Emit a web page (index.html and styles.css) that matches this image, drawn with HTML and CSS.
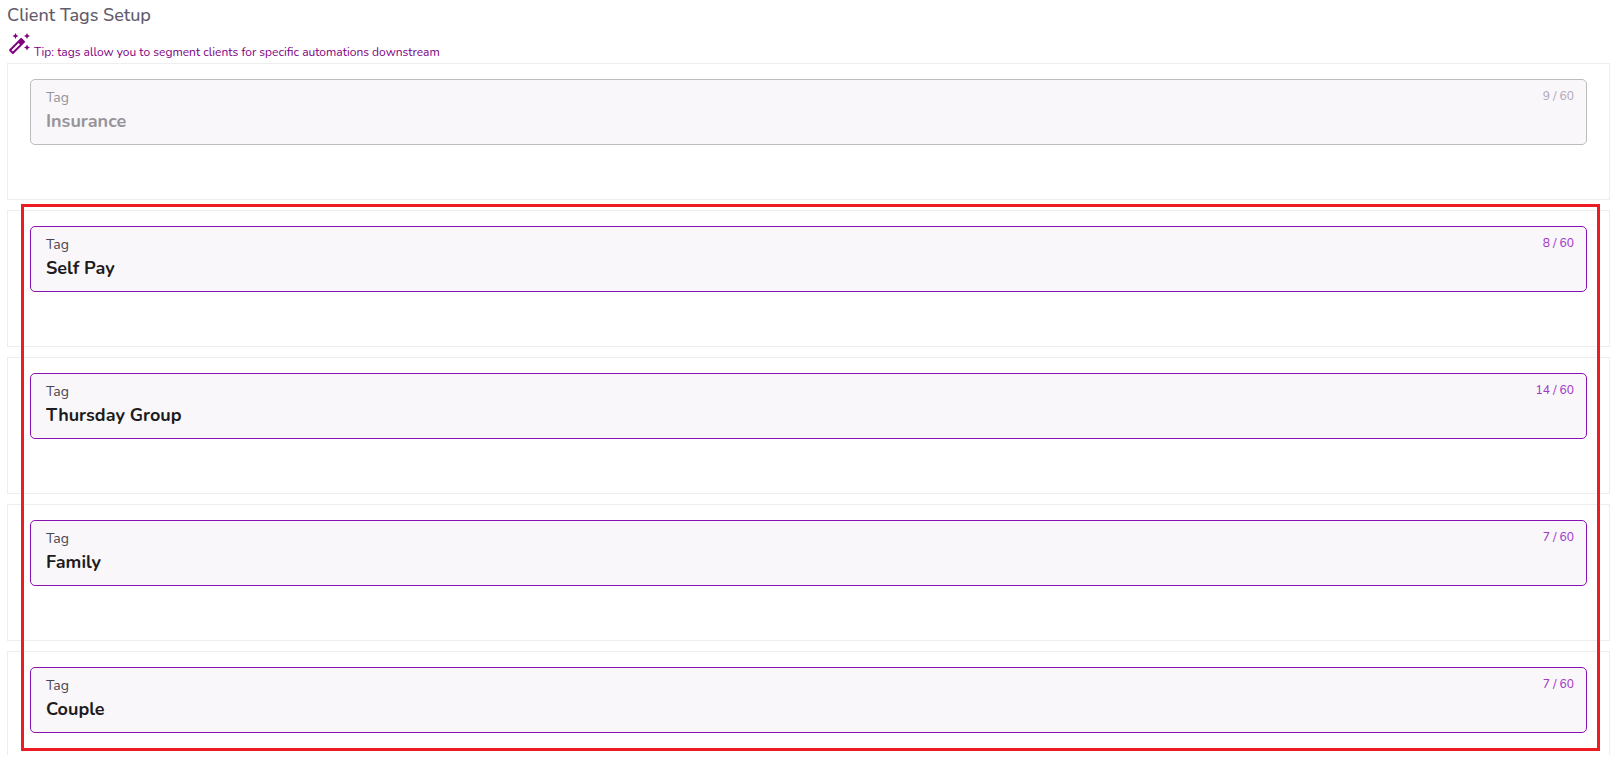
FILE: index.html
```html
<!DOCTYPE html>
<html lang="en">
  <head>
    <meta charset="UTF-8" />
    <meta name="viewport" content="width=device-width, initial-scale=1.0" />
    <title>Client Tags Setup</title>
    <link rel="stylesheet" href="styles.css">
  </head>
  <body>
    <main class="page">
      <h1 class="title">Client Tags Setup</h1>
      <div class="tip">
        <svg class="tip-icon" viewBox="0 0 24 24" fill="currentColor" aria-hidden="true">
          <path d="M20 7l.94-2.06L23 4l-2.06-.94L20 1l-.94 2.06L17 4l2.06.94zM8.5 7l.94-2.06L11.5 4l-2.06-.94L8.5 1l-.94 2.06L5.5 4l2.06.94zM20 12.5l-.94 2.06-2.06.94 2.06.94.94 2.06.94-2.06L23 15.5l-2.06-.94zM17.71 9.12l-2.83-2.83c-.2-.19-.45-.29-.71-.29s-.51.1-.71.29L2.29 17.46c-.39.39-.39 1.02 0 1.41l2.83 2.83c.2.2.45.3.71.3s.51-.1.71-.29l11.17-11.17c.39-.39.39-1.03 0-1.42zM5.83 19.59l-1.41-1.41L11.59 11 13 12.41l-7.17 7.18z" />
        </svg>
        <span class="tip-text">Tip: tags allow you to segment clients for specific automations downstream</span>
      </div>

      <div class="card">
        <div class="field disabled">
          <div class="field-main">
            <label for="tag1">Tag</label>
            <input type="text" id="tag1" name="tag1" value="Insurance" maxlength="60" disabled />
          </div>
          <span class="counter">9 / 60</span>
        </div>
      </div>

      <div class="highlighted">
        <div class="card">
          <div class="field">
            <div class="field-main">
              <label for="tag2">Tag</label>
              <input type="text" id="tag2" name="tag2" value="Self Pay" maxlength="60" />
            </div>
            <span class="counter">8 / 60</span>
          </div>
        </div>
        <div class="card">
          <div class="field">
            <div class="field-main">
              <label for="tag3">Tag</label>
              <input type="text" id="tag3" name="tag3" value="Thursday Group" maxlength="60" />
            </div>
            <span class="counter">14 / 60</span>
          </div>
        </div>
        <div class="card">
          <div class="field">
            <div class="field-main">
              <label for="tag4">Tag</label>
              <input type="text" id="tag4" name="tag4" value="Family" maxlength="60" />
            </div>
            <span class="counter">7 / 60</span>
          </div>
        </div>
        <div class="card">
          <div class="field">
            <div class="field-main">
              <label for="tag5">Tag</label>
              <input type="text" id="tag5" name="tag5" value="Couple" maxlength="60" />
            </div>
            <span class="counter">7 / 60</span>
          </div>
        </div>
        <div class="outline"></div>
      </div>
    </main>
  </body>
</html>
```

FILE: styles.css
```css
* {
  box-sizing: border-box;
}
body {
  margin: 0;
  background-color: #fff;
  font-family: Nunito, Lato, sans-serif;
}
.page {
  display: flex;
  flex-direction: column;
  height: calc(100vh - 20px);
  padding: 3px 2px 0 7px;
  overflow: hidden;
}
.title {
  flex: none;
  margin: 0;
  font-size: 18px;
  line-height: 24px;
  font-weight: 500;
  color: #625b6b;
}
.tip {
  display: flex;
  flex: none;
  align-items: flex-end;
  gap: 3px;
  height: 36px;
  padding-bottom: 3px;
  color: #800080;
}
.tip-icon {
  width: 24px;
  height: 24px;
  margin-bottom: 4px;
}
.tip-text {
  font-size: 12px;
  line-height: 16px;
}
.card {
  flex: none;
  min-height: 137px;
  margin-bottom: 10px;
  padding: 15px 22px;
  border: 1px solid #eee;
}
.field {
  display: flex;
  align-items: flex-start;
  height: 66px;
  padding: 8px 12px 8px 15px;
  border: 1px solid #8a12b4;
  border-radius: 5px;
  background-color: #f9f7fa;
}
.field-main {
  flex: 1;
}
label {
  display: block;
  font-size: 14px;
  line-height: 20px;
  color: #49454f;
}
input[type="text"] {
  display: block;
  width: 100%;
  height: 26px;
  padding: 0;
  border: none;
  outline: none;
  background: transparent;
  font-family: inherit;
  font-size: 18px;
  font-weight: 700;
  color: #1d1b20;
}
.counter {
  font-size: 12px;
  line-height: 16px;
  font-weight: 500;
  color: #a23cc8;
}
.disabled {
  border-color: #bdbbbf;
}
.disabled label,
.disabled input[type="text"] {
  color: #969499;
}
.disabled .counter {
  color: #b5a8bb;
}
.highlighted {
  position: relative;
  flex: none;
}
/* red frame drawn over the editable tags */
.outline {
  position: absolute;
  top: -6px;
  right: 10px;
  bottom: 47px;
  left: 14px;
  border: 3px solid #ed1c24;
  pointer-events: none;
}
```
